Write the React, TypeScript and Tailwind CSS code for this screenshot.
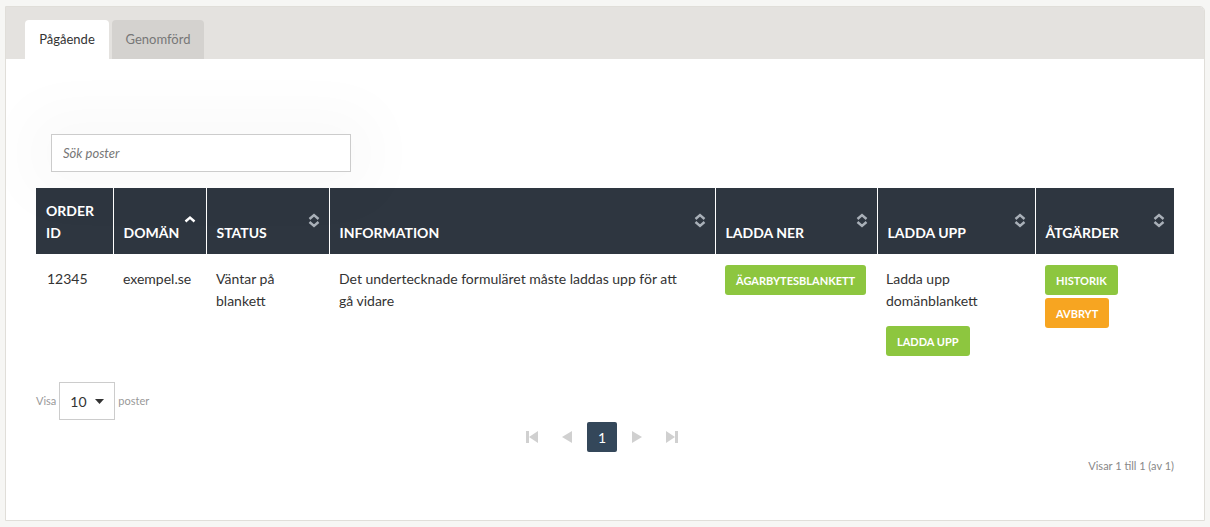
import React from "react";

const columns = [
  { label: "ORDER ID", width: "w-[77px]", sort: "none" },
  { label: "DOMÄN", width: "w-[93px]", sort: "asc" },
  { label: "STATUS", width: "w-[123px]", sort: "both" },
  { label: "INFORMATION", width: "w-[386px]", sort: "both" },
  { label: "LADDA NER", width: "w-[162px]", sort: "both" },
  { label: "LADDA UPP", width: "w-[158px]", sort: "both" },
  { label: "ÅTGÄRDER", width: "w-[139px]", sort: "both" },
];

function SortIcon({ sort }: { sort: string }) {
  if (sort === "none") return null;
  if (sort === "asc") {
    return (
      <svg className="absolute right-[10px] top-[27px]" width="12" height="8" viewBox="0 0 12 8">
        <path d="M1.5 6.5 L6 2.5 L10.5 6.5" fill="none" stroke="#ffffff" strokeWidth="2.4" />
      </svg>
    );
  }
  return (
    <svg className="absolute right-[9px] top-[25px]" width="12" height="15" viewBox="0 0 12 15">
      <path d="M1.5 6 L6 2 L10.5 6" fill="none" stroke="#a9b0b8" strokeWidth="2.4" />
      <path d="M1.5 9 L6 13 L10.5 9" fill="none" stroke="#a9b0b8" strokeWidth="2.4" />
    </svg>
  );
}

function Btn({ children, color }: { children: React.ReactNode; color: string }) {
  return (
    <button
      className={`${color} text-white text-[11px] font-bold uppercase h-[30px] px-[11px] rounded-[3px] leading-none`}
    >
      {children}
    </button>
  );
}

export default function App() {
  return (
    <div className="min-h-[527px] bg-[#f6f6f4] pt-[6px] px-[5px] font-['Lato',sans-serif] text-[#333]">
      <div className="border border-[#e0ded9] rounded-tr-[5px] bg-white h-[515px] overflow-hidden">
        <div className="bg-[#e4e2df] h-[52px] flex items-end pl-[19px] gap-[3px]">
          <div className="bg-white w-[84px] h-[39px] rounded-t-[4px] flex items-center justify-center text-[13px] text-[#333]">
            Pågående
          </div>
          <div className="bg-[#d4d2cf] w-[92px] h-[39px] rounded-t-[4px] flex items-center justify-center text-[13px] text-[#777]">
            Genomförd
          </div>
        </div>

        <div className="px-[30px]">
          <div className="pt-[75px] pl-[15px]">
            <input
              placeholder="Sök poster"
              className="w-[300px] h-[38px] border border-[#cccccc] px-[11px] text-[13px] italic placeholder:text-[#777] outline-none shadow-[0_0_60px_25px_rgba(0,0,0,0.025)]"
            />
          </div>

          <table className="mt-[16px] w-[1138px] border-collapse table-fixed">
            <thead>
              <tr className="bg-[#2e3640] h-[66px]">
                {columns.map((c, i) => (
                  <th
                    key={c.label}
                    className={`${c.width} relative align-bottom text-left text-white text-[14px] font-bold pl-[10px] pr-[22px] pb-[10px] leading-[22px] ${
                      i < columns.length - 1 ? "border-r border-white" : ""
                    }`}
                  >
                    {c.label}
                    <SortIcon sort={c.sort} />
                  </th>
                ))}
              </tr>
            </thead>
            <tbody>
              <tr className="align-top text-[14px] leading-[22px]">
                <td className="pl-[11px] pt-[14px]">12345</td>
                <td className="pl-[10px] pt-[14px]">exempel.se</td>
                <td className="pl-[10px] pt-[14px] pr-[10px]">Väntar på blankett</td>
                <td className="pl-[10px] pt-[14px] pr-[28px]">
                  Det undertecknade formuläret måste laddas upp för att gå vidare
                </td>
                <td className="pl-[10px] pt-[11px]">
                  <Btn color="bg-[#8dc63f]">Ägarbytesblankett</Btn>
                </td>
                <td className="pl-[9px] pt-[14px] pb-[10px] pr-[10px]">
                  <div>Ladda upp domänblankett</div>
                  <div className="mt-[14px]">
                    <Btn color="bg-[#8dc63f]">Ladda upp</Btn>
                  </div>
                </td>
                <td className="pl-[10px] pt-[11px]">
                  <div className="flex flex-col items-start gap-[3px]">
                    <Btn color="bg-[#8dc63f]">Historik</Btn>
                    <Btn color="bg-[#f7a521]">Avbryt</Btn>
                  </div>
                </td>
              </tr>
            </tbody>
          </table>

          <div className="mt-[16px] flex items-center gap-[3px] text-[11px] text-[#999]">
            <span>Visa</span>
            <div className="w-[56px] h-[38px] border border-[#cccccc] flex items-center justify-between px-[10px] text-[14px] text-[#333]">
              <span>10</span>
              <svg width="9" height="5" viewBox="0 0 9 5">
                <path d="M0 0 L9 0 L4.5 5 Z" fill="#333" />
              </svg>
            </div>
            <span>poster</span>
          </div>

          <div className="flex justify-center items-center gap-[5px] mt-[2px] pr-[6px]">
            <div className="w-[30px] h-[30px] flex items-center justify-center">
              <svg width="12" height="12" viewBox="0 0 12 12">
                <rect x="0" y="0" width="3" height="12" fill="#d0d0d0" />
                <path d="M12 0 L3 6 L12 12 Z" fill="#d0d0d0" />
              </svg>
            </div>
            <div className="w-[30px] h-[30px] flex items-center justify-center">
              <svg width="10" height="12" viewBox="0 0 10 12">
                <path d="M10 0 L0 6 L10 12 Z" fill="#d0d0d0" />
              </svg>
            </div>
            <div className="w-[30px] h-[30px] bg-[#34475a] rounded-[2px] flex items-center justify-center text-white text-[14px]">
              1
            </div>
            <div className="w-[30px] h-[30px] flex items-center justify-center">
              <svg width="10" height="12" viewBox="0 0 10 12">
                <path d="M0 0 L10 6 L0 12 Z" fill="#d0d0d0" />
              </svg>
            </div>
            <div className="w-[30px] h-[30px] flex items-center justify-center">
              <svg width="12" height="12" viewBox="0 0 12 12">
                <path d="M0 0 L9 6 L0 12 Z" fill="#d0d0d0" />
                <rect x="9" y="0" width="3" height="12" fill="#d0d0d0" />
              </svg>
            </div>
          </div>

          <div className="text-right text-[11px] text-[#888] mt-[6px]">Visar 1 till 1 (av 1)</div>
        </div>
      </div>
    </div>
  );
}
